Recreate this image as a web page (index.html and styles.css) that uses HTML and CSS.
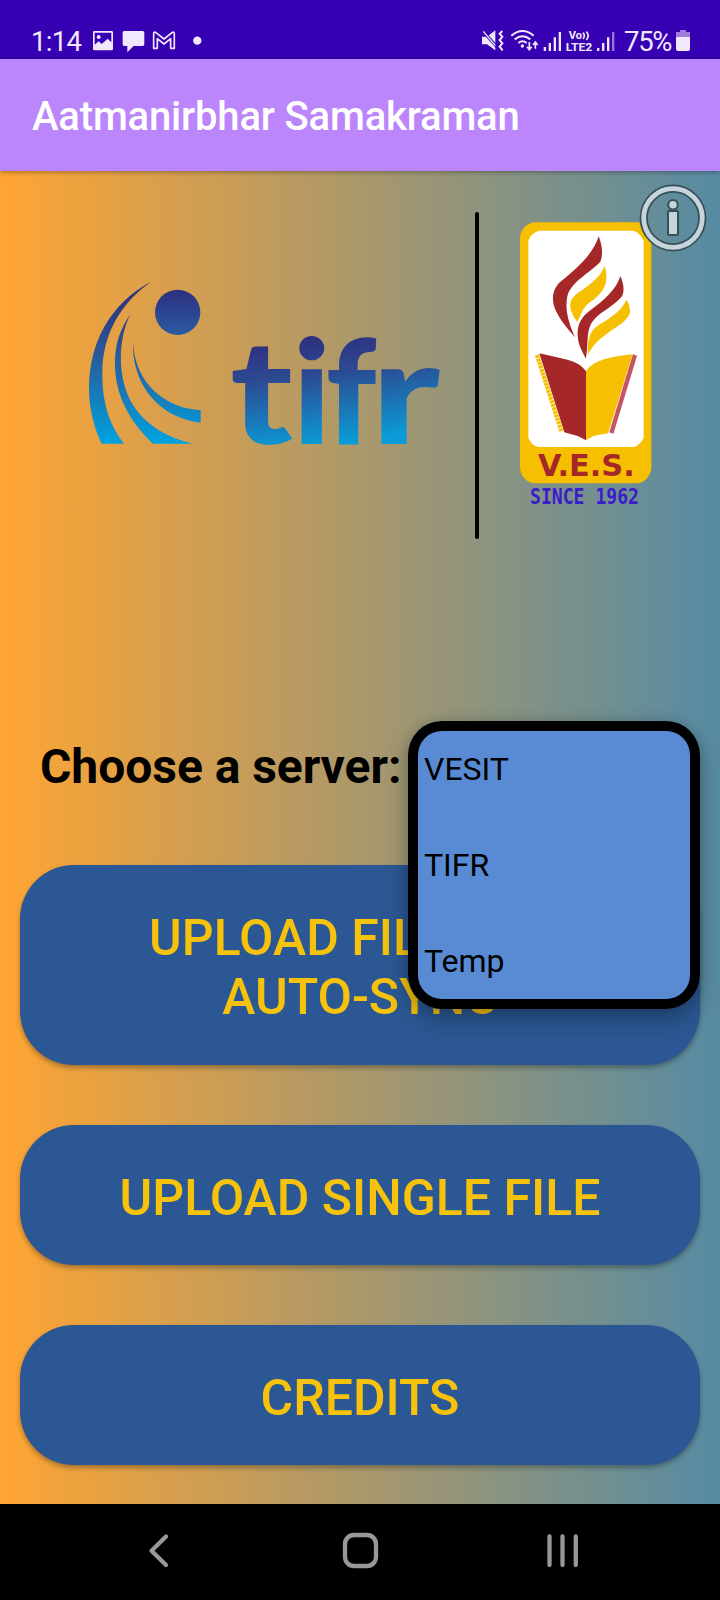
FILE: index.html
```html
<!DOCTYPE html>
<html lang="en">
<head>
<meta charset="utf-8">
<title>Aatmanirbhar Samakraman</title>
<link rel="stylesheet" href="styles.css">
</head>
<body>
<div class="screen">
  <header class="status">
    <span class="clock">1:14</span>
    <svg class="status-left" viewBox="270 84 340 80" width="113.3" height="26.7" fill="#f1e8fd">
      <path fill-rule="evenodd" d="M283 93h52q4 0 4 4v50q0 4-4 4h-52q-4 0-4-4V97q0-4 4-4zm1 5v36l12-10 9 8 18-16 11 11V98z"/>
      <circle cx="296" cy="111" r="6"/>
      <path d="M373 93h55q5 0 5 5v35q0 5-5 5h-27l-19 19v-19h-9q-5 0-5-5V98q0-5 5-5z"/>
      <path d="M461 145V101q0-7 7-3l24 19 24-19q7-4 7 3v44h-11v-29l-20 16-20-16v29z" fill="none" stroke="#f1e8fd" stroke-width="5" stroke-linejoin="round"/>
      <circle cx="592" cy="122" r="12.5"/>
    </svg>
    <svg class="status-right" viewBox="60 84 410 80" width="136.7" height="26.7" fill="#f1e8fd">
      <path d="M66 110h15l25-19v60l-25-18H66z"/>
      <path d="M68 92l42 48" stroke="#3700b3" stroke-width="9"/>
      <path d="M70 94l36 43" stroke="#f1e8fd" stroke-width="4"/>
      <path d="M127 93l-8 8 8 9-8 10 8 10-8 10 9 11" fill="none" stroke="#f1e8fd" stroke-width="6"/>
      <path d="M154 107q34-28 67 0M164 118q23-18 47 0M175 129q13-10 25 0" fill="none" stroke="#f1e8fd" stroke-width="6"/>
      <circle cx="187" cy="138" r="5"/>
      <path d="M208 126v22m-7-8l7 9 7-9M226 146v-19m-7 8l7-9 7 9" fill="none" stroke="#f1e8fd" stroke-width="5"/>
      <path d="M251 141h7v12h-7zM266 129h7v24h-7zM281 112h7v41h-7zM296 96h7v57h-7z"/>
      <text class="net" x="326" y="117" textLength="40" lengthAdjust="spacingAndGlyphs">Vo</text>
      <path d="M369 98q8 9 0 19M379 95q11 12 0 25" fill="none" stroke="#f1e8fd" stroke-width="5"/>
      <text class="net" x="317" y="152" textLength="80" lengthAdjust="spacingAndGlyphs">LTE2</text>
      <path d="M411 144h7v9h-7zM426 129h7v24h-7zM441 112h7v41h-7z"/>
      <path d="M456 96h7v57h-7z" opacity=".5"/>
    </svg>
    <span class="percent">75%</span>
    <svg class="battery" viewBox="0 0 14 21" width="14" height="21">
      <path d="M4 0h6v2h4v6H0V2h4z" fill="#9f7edb"/>
      <path d="M0 7h14v12q0 2-2 2H2q-2 0-2-2z" fill="#f1e8fd"/>
    </svg>
  </header>

  <div class="appbar"><h1 class="title">Aatmanirbhar Samakraman</h1></div>

  <main class="content">
    <svg class="info" viewBox="0 0 68 68" width="68" height="68">
      <circle cx="34" cy="34" r="29.3" fill="none" stroke="#344f57" stroke-width="8.2"/>
      <circle cx="34" cy="34" r="29.3" fill="none" stroke="#c6d5db" stroke-width="4.8"/>
      <circle cx="34" cy="20.8" r="4.8" fill="#c6d5db" stroke="#344f57" stroke-width="2"/>
      <rect x="29" y="27" width="10" height="24" rx="1" fill="#c6d5db" stroke="#344f57" stroke-width="2"/>
    </svg>

    <section class="logos">
      <svg class="tifr" viewBox="0 0 1170 600" width="390" height="200">
        <defs>
          <linearGradient id="mark" gradientUnits="userSpaceOnUse" x1="0" y1="90" x2="0" y2="550">
            <stop offset="0" stop-color="#2e2f7d"/><stop offset=".4" stop-color="#2b5797"/><stop offset="1" stop-color="#00a3df"/>
          </linearGradient>
          <linearGradient id="ball" x1="0" y1="0" x2="0" y2="1">
            <stop offset="0" stop-color="#2e2f80"/><stop offset="1" stop-color="#2a5ba1"/>
          </linearGradient>
          <linearGradient id="word" gradientUnits="userSpaceOnUse" x1="620" y1="240" x2="660" y2="565">
            <stop offset="0" stop-color="#2e2f7f"/><stop offset=".35" stop-color="#2c4a92"/><stop offset="1" stop-color="#0b9bd6"/>
          </linearGradient>
        </defs>
        <g fill="url(#mark)">
          <path d="M243 65C120 130 57 250 57 385C57 445 72 505 95 551H162C115 490 97 425 97 340C97 225 150 130 243 65z"/>
          <path d="M181 163C145 215 134 260 135 320C138 410 180 485 249 551H373C290 535 220 490 183 425C143 350 143 240 181 163z"/>
          <path d="M189 247C185 370 265 475 392 488V451C290 445 195 375 189 247z"/>
        </g>
        <circle cx="323" cy="157" r="68" fill="url(#ball)"/>
        <g class="tifr-word" fill="url(#word)">
          <text y="551"><tspan x="481" textLength="188" lengthAdjust="spacingAndGlyphs">t</tspan><tspan x="668" textLength="114" lengthAdjust="spacingAndGlyphs">i</tspan><tspan x="767" textLength="152" lengthAdjust="spacingAndGlyphs">f</tspan><tspan x="903" textLength="207" lengthAdjust="spacingAndGlyphs">r</tspan></text>
        </g>
      </svg>
      <div class="divider"></div>
      <svg class="ves" viewBox="150 120 450 900" width="150" height="300">
        <rect x="180" y="157" width="394" height="783" rx="48" fill="#f6c000"/>
        <path d="M236 182H520Q541 189 551 213V803Q542 822 523 831H235Q212 824 205 803V213Q212 190 236 182z" fill="#fff"/>
        <g fill="#a52727">
          <path d="M416 199C399 254 350 295 304 333C276 356 273 390 287 421C302 454 327 481 345 502C325 458 313 413 323 375C336 334 387 310 421 275C431 251 425 222 416 199z"/>
          <path d="M481 318C470 357 433 390 393 419C364 440 348 465 354 507C357 531 370 548 377 566C386 530 377 491 394 460C414 427 455 416 486 379C496 360 488 333 481 318z"/>
          <path d="M238 550L310 566C345 574 366 585 378 604V811L353 798L313 787z"/>
        </g>
        <g fill="#f6c000">
          <path d="M434 288C418 328 382 348 347 374C329 389 328 404 334 424Q340 444 352 456C366 427 369 411 394 394C422 374 440 349 439 325Q440 303 434 288z"/>
          <path d="M499 389C485 422 455 441 417 464C391 480 381 505 384 554C400 519 430 498 464 475C492 456 513 438 510 419Q509 402 499 389z"/>
          <path d="M378 604C400 570 451 560 518 553L444 790L400 798L378 811z"/>
        </g>
        <path d="M231 555L305 786" stroke="#f6c000" stroke-width="13" stroke-dasharray="9 2"/>
        <path d="M525 555L454 789" stroke="#c55563" stroke-width="13"/>
        <text class="ves-name" x="234" y="917" textLength="290" lengthAdjust="spacingAndGlyphs">V.E.S.</text>
        <text class="ves-since" x="210" y="1003" textLength="327" lengthAdjust="spacingAndGlyphs">SINCE 1962</text>
      </svg>
    </section>

    <section class="server">
      <h2 class="server-label">Choose a server:</h2>
      <div class="spinner">
        <ul class="options">
          <li class="option">VESIT</li>
          <li class="option">TIFR</li>
          <li class="option">Temp</li>
        </ul>
      </div>
    </section>

    <section class="actions">
      <button class="action tall">UPLOAD FILES VIA<br>AUTO-SYNC</button>
      <button class="action">UPLOAD SINGLE FILE</button>
      <button class="action">CREDITS</button>
    </section>
  </main>

  <nav class="navbar">
    <svg viewBox="0 0 520 96" width="520" height="96" fill="none" stroke="#989898" stroke-width="4.3" stroke-linecap="round" stroke-linejoin="round">
      <path d="M66 32.5L51.5 46.7L66 61"/>
      <rect x="245" y="31" width="31" height="31" rx="9"/>
      <path d="M449.5 32.500v28.500M462.500 32.500v28.500M475.800 32.500v28.500"/>
    </svg>
  </nav>
</div>
</body>
</html>
```

FILE: styles.css
```css
* { box-sizing: border-box; }
body { margin: 0; font-family: Roboto, "Liberation Sans", sans-serif; }
svg { display: block; flex: none; }

.screen { width: 720px; height: 1600px; display: flex; flex-direction: column; overflow: hidden; }

.status { height: 59px; background: #3700b3; color: #f1e8fd; display: flex; align-items: flex-start; padding: 28px 30px 0 31px; font-size: 27.5px; line-height: 28px; }
.clock { width: 59px; white-space: nowrap; letter-spacing: -0.7px; }
.status-right { margin-left: auto; }
.percent { margin-left: 7px; width: 52px; white-space: nowrap; letter-spacing: -1.3px; }
.battery { margin-top: 2px; }
.net { font-size: 32px; font-weight: 700; }

.appbar { height: 112px; background: #bb86fc; display: flex; align-items: center; padding-left: 32px; position: relative; z-index: 1; box-shadow: 0 1px 5px rgba(0, 0, 0, .35); }
.title { margin: 0; font-size: 40px; line-height: 48px; font-weight: 500; letter-spacing: -0.17px; color: #fff; padding-top: 4px; }

.content { flex: 1; position: relative; background: linear-gradient(90deg, #ffa533, #568ba3); }
.info { position: absolute; top: 13px; left: 639px; z-index: 1; }

.logos { display: flex; align-items: flex-start; height: 549px; padding: 39px 0 0 70px; }
.tifr { margin-top: 50px; overflow: visible; }
.ves { overflow: visible; }
.tifr-word { font-family: Lato, "Open Sans", sans-serif; font-weight: 900; font-size: 436px; }
.divider { width: 3.500px; height: 327px; margin: 2px 31px 0 15px; border-radius: 2px; background: #000; }
.ves-name { font-family: "DejaVu Sans", sans-serif; font-weight: 700; font-size: 93px; fill: #a52727; }
.ves-since { font-family: "DejaVu Sans Mono", monospace; font-weight: 700; font-size: 66px; fill: #3a1cc8; }

.server { height: 145px; display: flex; align-items: flex-start; padding: 17px 20px 0 40px; }
.server-label { margin: 0; width: 368px; padding-top: 2px; font-size: 48px; line-height: 56px; font-weight: 700; letter-spacing: -0.05px; color: #000; white-space: nowrap; }
.spinner { position: relative; width: 292px; }
.options { position: absolute; top: -16px; left: 0; z-index: 2; margin: 0; padding: 0; width: 292px; height: 288px; list-style: none; background: #588bd4; border-radius: 34px; box-shadow: inset 0 0 0 10px #000, 0 12px 24px rgba(0, 0, 0, .25), 0 0 12px rgba(0, 0, 0, .15); }
.option { height: 96px; line-height: 97px; padding-left: 16px; font-size: 32px; color: #000; }

.actions { display: flex; flex-direction: column; gap: 60px; padding: 0 20px; }
.action { height: 140px; border: 0; border-radius: 54px; background: #2b5894; color: #f6c20b; font: 500 50px/59px Roboto, sans-serif; padding: 6px 0 0; box-shadow: 0 3px 5px rgba(0, 0, 0, .3); }
.tall { height: 200px; }

.navbar { height: 96px; background: #000; display: flex; justify-content: center; }
```
